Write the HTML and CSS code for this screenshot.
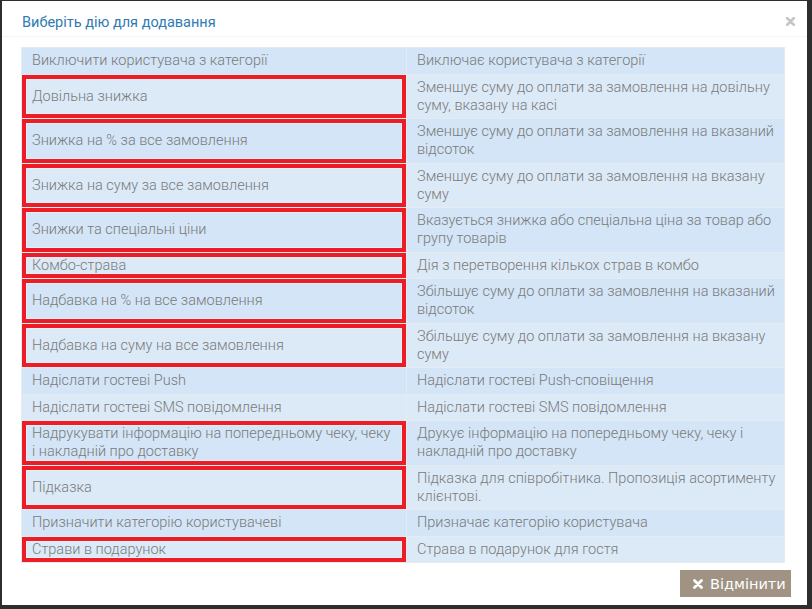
FILE: index.html
```html
<!doctype html>
<html>
<head>
<meta charset="utf-8">
<link rel="stylesheet" href="styles.css">
</head>
<body>
<div class="modal">
	<div class="modal-head">
		<span class="title">Виберіть дію для додавання</span>
		<svg class="close" width="9" height="9" viewBox="0 0 9 9"><path d="M1 1L8 8M8 1L1 8" stroke="#c6c6c6" stroke-width="2.6" stroke-linecap="round"/></svg>
	</div>
	<div class="modal-body">
		<table class="actions">
			<tr><td>Виключити користувача з категорії</td><td>Виключає користувача з категорії</td></tr>
			<tr><td class="mark">Довільна знижка</td><td>Зменшує суму до оплати за замовлення на довільну суму, вказану на касі</td></tr>
			<tr><td class="mark">Знижка на % за все замовлення</td><td>Зменшує суму до оплати за замовлення на вказаний відсоток</td></tr>
			<tr><td class="mark">Знижка на суму за все замовлення</td><td>Зменшує суму до оплати за замовлення на вказану суму</td></tr>
			<tr><td class="mark">Знижки та спеціальні ціни</td><td>Вказується знижка або спеціальна ціна за товар або групу товарів</td></tr>
			<tr><td class="mark">Комбо-страва</td><td>Дія з перетворення кількох страв в комбо</td></tr>
			<tr><td class="mark">Надбавка на % на все замовлення</td><td>Збільшує суму до оплати за замовлення на вказаний відсоток</td></tr>
			<tr><td class="mark">Надбавка на суму на все замовлення</td><td>Збільшує суму до оплати за замовлення на вказану суму</td></tr>
			<tr><td>Надіслати гостеві Push</td><td>Надіслати гостеві Push-сповіщення</td></tr>
			<tr><td>Надіслати гостеві SMS повідомлення</td><td>Надіслати гостеві SMS повідомлення</td></tr>
			<tr><td class="mark">Надрукувати інформацію на попередньому чеку, чеку і накладній про доставку</td><td>Друкує інформацію на попередньому чеку, чеку і накладній про доставку</td></tr>
			<tr><td class="mark">Підказка</td><td>Підказка для співробітника. Пропозиція асортименту клієнтові.</td></tr>
			<tr><td>Призначити категорію користувачеві</td><td>Призначає категорію користувача</td></tr>
			<tr><td class="mark">Страви в подарунок</td><td>Страва в подарунок для гостя</td></tr>
		</table>
	</div>
	<div class="modal-foot">
		<button class="btn-cancel"><svg width="10" height="10" viewBox="0 0 10 10"><path d="M1.5 1.5L8.5 8.5M8.5 1.5L1.5 8.5" stroke="#fff" stroke-width="2.8" stroke-linecap="round"/></svg>Відмінити</button>
	</div>
</div>
</body>
</html>
```

FILE: styles.css
```css
body{
	margin:0px;
	padding:0px;
	background:#2e2e2e;
	font-family:Roboto, "Liberation Sans", sans-serif;
}
.modal{
	margin:1px 5px 0px 2px;
	height:604px;
	background:#fff;
	display:flex;
	flex-direction:column;
}
.modal-head{
	display:flex;
	justify-content:space-between;
	align-items:center;
	height:36px;
	padding:7px 12px 0px 20px;
	box-sizing:border-box;
	border-bottom:1px solid #f4f4f4;
}
.title{
	color:#2f7bb3;
	font-size:14.5px;
}
.close{
	margin-top:-2px;
}
.modal-body{
	padding:10px 21px 0px 19px;
}
.actions{
	border-collapse:collapse;
	width:764px;
	font-size:14.5px;
	font-weight:300;
	color:#7a7a7a;
	line-height:18px;
}
.actions td{
	border:1px solid #e6ebf0;
	padding:4px 6px 3.5px 10px;
	vertical-align:middle;
}
.actions td:first-child{
	width:362px;
	padding-right:12px;
}
.actions tr:nth-child(odd) td{
	background:#d3e5f6;
}
.actions tr:nth-child(even) td{
	background:#dceaf8;
}
.actions td.mark{
	box-shadow:inset 0 0 0 4px #ec1d26, inset 0 0 0 5px #e9eef4;
}
.modal-foot{
	display:flex;
	justify-content:flex-end;
	padding:7px 16px 0px 0px;
}
.btn-cancel{
	display:flex;
	align-items:center;
	gap:7px;
	height:27px;
	width:111px;
	padding:0px 0px 0px 13px;
	border:none;
	background:#a09384;
	color:#fff;
	font-family:"DejaVu Sans", sans-serif;
	font-size:14.5px;
}
```
